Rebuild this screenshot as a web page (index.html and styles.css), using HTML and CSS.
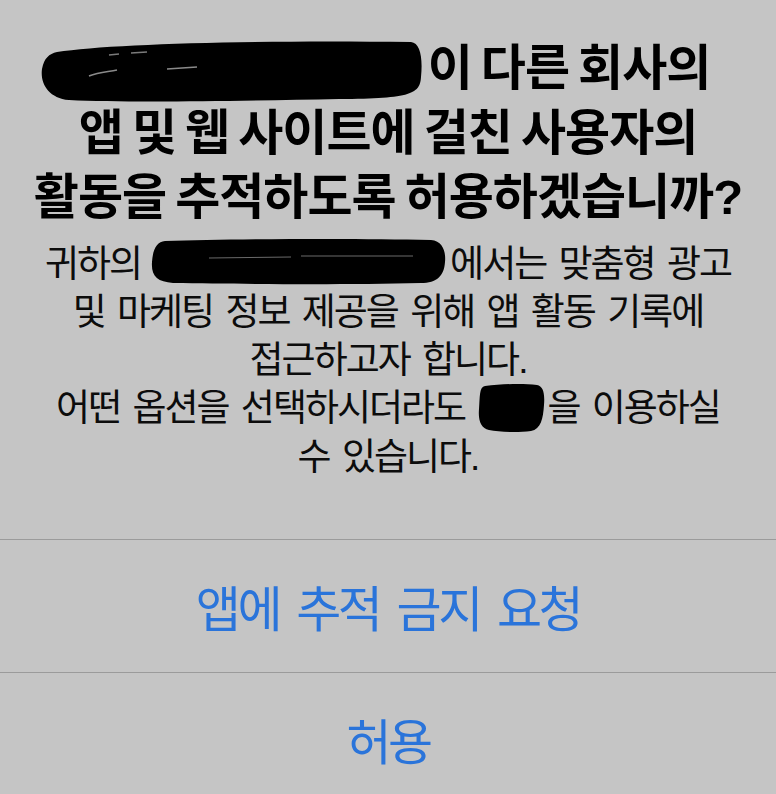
FILE: index.html
```html
<!DOCTYPE html>
<html lang="ko">
<head>
<meta charset="utf-8">
<title>추적 허용</title>
<link rel="stylesheet" href="styles.css">
</head>
<body>
<div class="alert">
  <div class="content">
    <h1 class="title"><span class="redact redact-title"><svg width="383" height="64" viewBox="0 0 383 64"><path d="M18,13 C70,5 210,1 372,3 C381,4 384,18 382,38 C381,54 374,60 300,60 C200,62 90,64 30,61 C9,59 1,44 3,30 C5,19 10,15 18,13 Z" fill="#000"/><path d="M70,16 L80,15 M92,14 L108,13" stroke="#7a7a7a" stroke-width="1.5" fill="none"/><path d="M50,37 C60,33 68,33 78,31 M128,30 L158,28" stroke="#8a8a8a" stroke-width="1.5" fill="none"/></svg></span>이 다른 회사의<br>앱 및 웹 사이트에 걸친 사용자의<br>활동을 추적하도록 허용하겠습니까?</h1>
    <p class="message">귀하의<span class="redact redact-body"><svg width="295" height="47" viewBox="0 0 295 47"><path d="M14,3 C80,1 200,0 280,2 C292,3 295,14 294,24 C293,38 286,45 270,45 C190,47 90,46 22,45 C6,44 0,38 1,24 C2,10 6,4 14,3 Z" fill="#000"/><path d="M58,20 L140,19 M150,18 L262,18" stroke="#6a6a6a" stroke-width="1" fill="none"/></svg></span>에서는 맞춤형 광고<br>및 마케팅 정보 제공을 위해 앱 활동 기록에<br>접근하고자 합니다.<br>어떤 옵션을 선택하시더라도 <span class="redact redact-small"><svg width="68" height="50" viewBox="0 0 68 50"><path d="M8,3 C25,1 45,0 60,2 C66,3 68,10 67,22 C66,36 64,46 54,48 C40,50 22,49 12,47 C4,45 1,38 2,26 C3,14 2,4 8,3 Z" fill="#000"/></svg></span>을 이용하실<br>수 있습니다.</p>
  </div>
  <div class="actions">
    <button class="action">앱에 추적 금지 요청</button>
    <button class="action">허용</button>
  </div>
</div>
</body>
</html>
```

FILE: styles.css
```css
html, body {
  margin: 0;
  padding: 0;
}

body {
  width: 776px;
  height: 794px;
  overflow: hidden;
  background: #c5c5c5;
  font-family: "Noto Sans CJK KR", "Noto Sans", sans-serif;
  color: #000;
}

.alert {
  display: flex;
  flex-direction: column;
  width: 776px;
}

.content {
  padding: 36px 0 57px;
  display: flex;
  flex-direction: column;
  gap: 11px;
}

.title {
  margin: 0;
  font-family: "Liberation Sans", "Noto Sans CJK KR", sans-serif;
  font-size: 49px;
  font-weight: 700;
  line-height: 64.5px;
  letter-spacing: -1px;
  word-spacing: -3.5px;
  text-align: center;
  color: #000;
}

.message {
  margin: 0;
  font-family: "Liberation Sans", "Noto Sans CJK KR", sans-serif;
  font-size: 37px;
  font-weight: 400;
  line-height: 48.3px;
  letter-spacing: -2px;
  word-spacing: 4px;
  text-align: center;
  color: #0c0c0c;
}

.redact {
  display: inline-block;
  vertical-align: middle;
  line-height: 0;
  letter-spacing: 0;
  word-spacing: 0;
  margin-top: -30px;
  margin-bottom: -30px;
}

.redact svg {
  display: block;
}

.redact-title {
  margin-left: -27px;
  margin-right: 6px;
  transform: translateY(-1px);
}

.redact-body {
  margin-left: 10px;
  margin-right: 4px;
  transform: translateY(-5px);
}

.redact-small {
  margin-right: 2px;
  transform: translateY(-4px);
}

.actions {
  display: flex;
  flex-direction: column;
}

.action {
  display: flex;
  align-items: center;
  justify-content: center;
  height: 133px;
  margin: 0;
  padding: 0;
  border: 0;
  border-top: 1px solid #9b9b9b;
  background: transparent;
  font-family: "Noto Sans CJK KR", "Noto Sans", sans-serif;
  font-size: 49px;
  font-weight: 400;
  letter-spacing: -3.5px;
  word-spacing: 7px;
  color: #2a74da;
}
```
